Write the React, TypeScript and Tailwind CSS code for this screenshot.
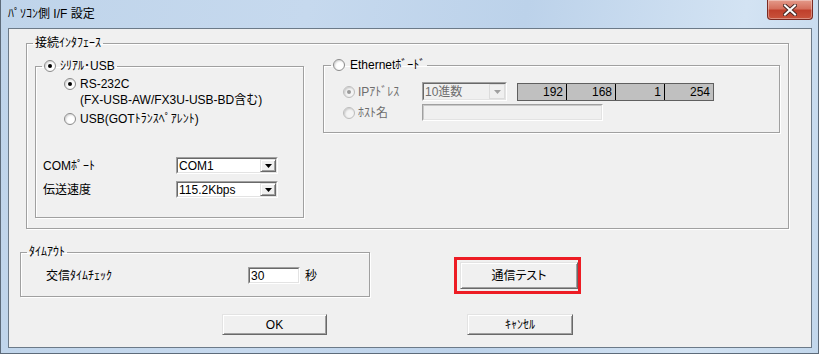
import React from 'react';

const ui = "font-['Liberation_Sans','Noto_Sans_CJK_JP',sans-serif] text-[12px] leading-[14px] text-black";

function Radio({ checked, disabled }: { checked?: boolean; disabled?: boolean }) {
  return (
    <span
      className={`flex h-[12px] w-[12px] shrink-0 items-center justify-center rounded-full border ${
        disabled ? 'border-[#bcbcbc] bg-[#f4f4f4]' : 'border-[#8a8a8a] bg-white'
      } shadow-[inset_1px_1px_2px_rgba(0,0,0,0.18)]`}
    >
      {checked && <span className={`h-[4px] w-[4px] rounded-full ${disabled ? 'bg-[#9a9a9a]' : 'bg-black'}`} />}
    </span>
  );
}

function Arrow({ disabled }: { disabled?: boolean }) {
  return (
    <svg width="7" height="4" viewBox="0 0 7 4">
      <polygon points="0,0 7,0 3.5,4" fill={disabled ? '#a0a0a0' : '#000'} />
    </svg>
  );
}

// sunken combo box with the little raised drop button at the right
function Combo({ value, className, disabled }: { value: string; className: string; disabled?: boolean }) {
  return (
    <div className={`flex border border-t-[#a0a0a0] border-l-[#a0a0a0] border-r-white border-b-white ${className}`}>
      <div
        className={`flex flex-1 items-stretch border border-t-[#696969] border-l-[#696969] border-r-[#e3e3e3] border-b-[#e3e3e3] ${
          disabled ? 'bg-[#f0f0f0] text-[#6d6d6d]' : 'bg-white'
        }`}
      >
        <span className="flex flex-1 items-center pl-[1px]">{value}</span>
        <span
          className={`flex w-[16px] items-center justify-center border ${
            disabled
              ? 'border-[#dcdcdc] bg-[#f0f0f0]'
              : 'border-t-[#e3e3e3] border-l-[#e3e3e3] border-r-[#696969] border-b-[#696969] bg-[#f0f0f0] shadow-[inset_1px_1px_0_#fff,inset_-1px_-1px_0_#a0a0a0]'
          }`}
        >
          <Arrow disabled={disabled} />
        </span>
      </div>
    </div>
  );
}

function Button({ label, className }: { label: string; className: string }) {
  return (
    <button
      className={`flex items-center justify-center border border-t-[#e3e3e3] border-l-[#e3e3e3] border-r-[#696969] border-b-[#696969] bg-[#f0f0f0] shadow-[inset_1px_1px_0_#fff,inset_-1px_-1px_0_#a0a0a0] ${className}`}
    >
      {label}
    </button>
  );
}

const group = 'border border-[#a0a0a0] p-0 shadow-[inset_1px_1px_0_#fff,1px_1px_0_#fff]';

export default function App() {
  const ip = ['192', '168', '1', '254'];

  return (
    <div
      className={`${ui} flex h-[354px] w-[819px] flex-col border-x border-b border-[#5d6b7a] bg-[linear-gradient(100deg,#bfd4ea_0%,#c6d9ee_35%,#bcd2ea_60%,#d3e3f3_85%,#c2d7ec_100%)]`}
    >
      {/* Title bar */}
      <div className="flex h-[28px] items-start justify-between pl-[7px] pr-[5px]">
        <span className="mt-[7px]">ﾊﾟｿｺﾝ側 I/F 設定</span>
        <div className="flex h-[20px] w-[46px] items-center justify-center rounded-b-[4px] border border-t-0 border-[#7a2a22] bg-[linear-gradient(180deg,#e49a8a_0%,#d5705d_45%,#c0402c_55%,#c9533c_100%)] shadow-[inset_0_0_0_1px_rgba(255,255,255,0.35)]">
          <svg width="14" height="12" viewBox="0 0 14 12">
            <path d="M2 1.5 L12 10.5 M12 1.5 L2 10.5" stroke="#4a2a26" strokeWidth="4" strokeLinecap="square" />
            <path d="M2 1.5 L12 10.5 M12 1.5 L2 10.5" stroke="#fff" strokeWidth="2" strokeLinecap="square" />
          </svg>
        </div>
      </div>

      {/* Client area */}
      <div className="ml-[7px] flex h-[320px] w-[804px] flex-col border border-[#6c7a88] bg-[#f0f0f0]">
        {/* 接続インタフェース */}
        <fieldset className={`${group} ml-[17px] mt-[7px] w-[763px]`}>
          <legend className="ml-[6px] px-[2px] leading-[14px]">接続ｲﾝﾀﾌｪｰｽ</legend>
          <div className="flex items-start">
            {/* Serial / USB */}
            <fieldset className={`${group} mb-[10px] ml-[8px] mt-[9px] w-[269px] pb-[19px]`}>
              <legend className="ml-[6px] px-[2px] leading-[14px]">
                <span className="flex items-center gap-[4px]">
                  <Radio checked />
                  ｼﾘｱﾙ･USB
                </span>
              </legend>
              <div className="mt-[3px] flex h-[16px] items-center gap-[4px] pl-[28px]">
                <Radio checked />
                RS-232C
              </div>
              <div className="flex h-[16px] items-center pl-[44px]">(FX-USB-AW/FX3U-USB-BD含む)</div>
              <div className="mt-[3px] flex h-[16px] items-center gap-[4px] pl-[28px]">
                <Radio />
                USB(GOTﾄﾗﾝｽﾍﾟｱﾚﾝﾄ)
              </div>
              <div className="mt-[30px] flex h-[17px] items-center pl-[7px]">
                <span className="w-[133px]">COMﾎﾟｰﾄ</span>
                <Combo value="COM1" className="h-[17px] w-[102px]" />
              </div>
              <div className="mt-[7px] flex h-[17px] items-center pl-[7px]">
                <span className="w-[133px]">伝送速度</span>
                <Combo value="115.2Kbps" className="h-[17px] w-[102px]" />
              </div>
            </fieldset>

            {/* Ethernet board */}
            <fieldset className={`${group} ml-[19px] mt-[8px] w-[457px] pb-[11px]`}>
              <legend className="ml-[7px] px-[2px] leading-[14px]">
                <span className="flex items-center gap-[5px]">
                  <Radio />
                  Ethernetﾎﾞｰﾄﾞ
                </span>
              </legend>
              <div className="mt-[10px] flex h-[19px] items-center pl-[19px] text-[#6d6d6d]">
                <span className="flex w-[79px] items-center gap-[3px]">
                  <Radio checked disabled />
                  IPｱﾄﾞﾚｽ
                </span>
                <Combo value="10進数" className="h-[19px] w-[85px]" disabled />
                <div className="ml-[10px] flex h-[18px] w-[197px] border border-[#5f5f5f] bg-[#c0c0c0] text-black">
                  {ip.map((v, i) => (
                    <span
                      key={i}
                      className={`flex flex-1 items-center justify-end pr-[3px] ${i < 3 ? 'border-r border-black' : ''}`}
                    >
                      {v}
                    </span>
                  ))}
                </div>
              </div>
              <div className="mt-[3px] flex h-[17px] items-center pl-[19px] text-[#6d6d6d]">
                <span className="flex w-[79px] items-center gap-[3px]">
                  <Radio disabled />
                  ﾎｽﾄ名
                </span>
                <div className="h-[17px] w-[181px] border border-t-[#a0a0a0] border-l-[#a0a0a0] border-r-white border-b-white">
                  <div className="h-full border border-t-[#c8c8c8] border-l-[#c8c8c8] border-r-[#e3e3e3] border-b-[#e3e3e3] bg-[#f0f0f0]" />
                </div>
              </div>
            </fieldset>
          </div>
        </fieldset>

        {/* タイムアウト + 通信テスト */}
        <div className="mt-[16px] flex items-start">
          <fieldset className={`${group} ml-[11px] w-[350px] pb-[12px]`}>
            <legend className="ml-[6px] px-[2px] leading-[14px]">ﾀｲﾑｱｳﾄ</legend>
            <div className="mt-[8px] flex h-[17px] items-center pl-[25px]">
              <span className="w-[202px]">交信ﾀｲﾑﾁｪｯｸ</span>
              <div className="h-[17px] w-[52px] border border-t-[#a0a0a0] border-l-[#a0a0a0] border-r-white border-b-white">
                <div className="flex h-full items-center border border-t-[#696969] border-l-[#696969] border-r-[#e3e3e3] border-b-[#e3e3e3] bg-white pl-[1px]">
                  30
                </div>
              </div>
              <span className="ml-[5px]">秒</span>
            </div>
          </fieldset>

          <div className="ml-[84px] mt-[12px] flex h-[37px] w-[127px] items-start border-[3px] border-[#ed1c24] pl-[3px] pt-[2px]">
            <Button label="通信テスト" className="h-[27px] w-[118px] [font-feature-settings:'palt']" />
          </div>
        </div>

        {/* OK / Cancel */}
        <div className="mt-[17px] flex">
          <Button label="OK" className="ml-[213px] h-[21px] w-[105px]" />
          <Button label="ｷｬﾝｾﾙ" className="ml-[140px] h-[21px] w-[106px]" />
        </div>
      </div>
    </div>
  );
}
